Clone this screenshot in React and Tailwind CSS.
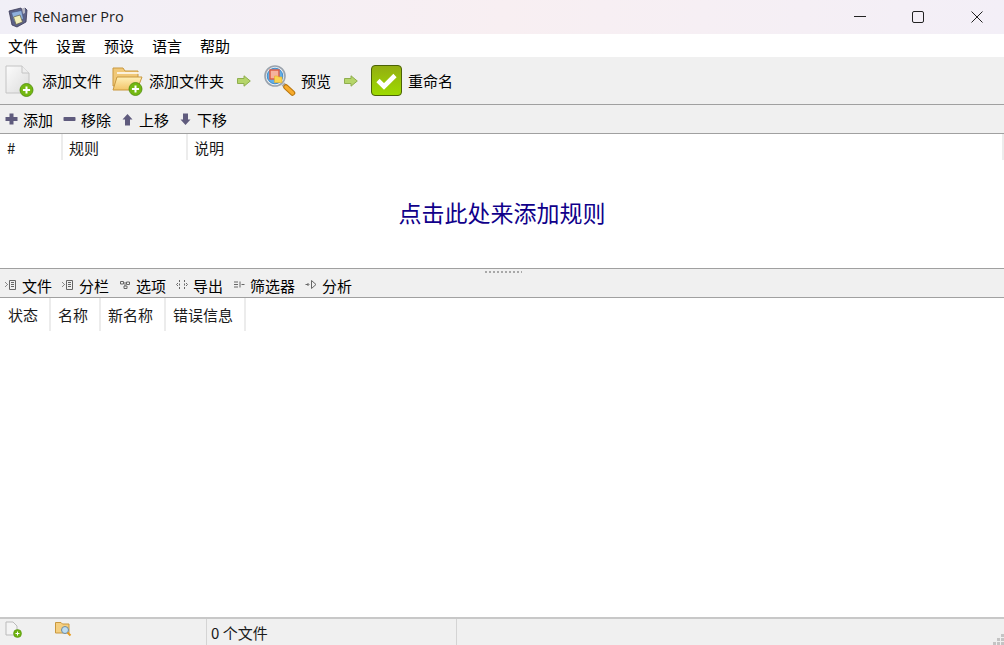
import React from 'react';

const CJK = 'font-["Noto_Sans_CJK_SC","Noto_Sans",sans-serif]';

const PlusBadge = ({ cx, cy, r }) => (
  <g>
    <circle cx={cx} cy={cy} r={r} fill="#74b811" stroke="#4c8a0a" strokeWidth="0.8" />
    <path d={`M${cx - r * 0.55} ${cy}H${cx + r * 0.55}M${cx} ${cy - r * 0.55}V${cy + r * 0.55}`} stroke="#fff" strokeWidth="2" />
  </g>
);

const FileAddIcon = () => (
  <svg width="30" height="32" viewBox="0 0 30 32">
    <defs>
      <linearGradient id="pg" x1="0" y1="0" x2="1" y2="1">
        <stop offset="0" stopColor="#fcfcfc" />
        <stop offset="1" stopColor="#dcdcdc" />
      </linearGradient>
    </defs>
    <path d="M2 1H18L25 8V28H2Z" fill="url(#pg)" stroke="#c4c4c4" />
    <path d="M18 1V8H25" fill="#eee" stroke="#c4c4c4" />
    <PlusBadge cx={22.5} cy={25} r={6.5} />
  </svg>
);

const FolderAddIcon = () => (
  <svg width="32" height="30" viewBox="0 0 32 30">
    <defs>
      <linearGradient id="fg" x1="0" y1="0" x2="0" y2="1">
        <stop offset="0" stopColor="#fff0b8" />
        <stop offset="1" stopColor="#f2c468" />
      </linearGradient>
    </defs>
    <path d="M1 2H11L13 5H26V20H1Z" fill="#f0c878" stroke="#c9983e" />
    <path d="M5 7H27" stroke="#fff" strokeWidth="1.5" />
    <path d="M1 24L5 11H30L25 24Z" fill="url(#fg)" stroke="#c9983e" />
    <PlusBadge cx={23.5} cy={23} r={6.5} />
  </svg>
);

const GreenArrow = () => (
  <svg width="14" height="12" viewBox="0 0 14 12">
    <path d="M0.5 3.5H7V0.8L13.3 6L7 11.2V8.5H0.5Z" fill="#b5d56a" stroke="#8fae4e" />
  </svg>
);

const MagnifierIcon = () => (
  <svg width="32" height="32" viewBox="0 0 32 32">
    <path d="M19 19L22 22" stroke="#a9a9a9" strokeWidth="4" />
    <path d="M22 22L28.5 28" stroke="#b9770f" strokeWidth="5.5" strokeLinecap="round" />
    <path d="M22 22L28.5 28" stroke="#f7ab2c" strokeWidth="3.4" strokeLinecap="round" />
    <circle cx="11" cy="11" r="10" fill="#e8eef4" stroke="#9aa3ad" strokeWidth="1.6" />
    <circle cx="11" cy="11" r="7.8" fill="#62aee6" stroke="#2b7fc4" strokeWidth="0.8" />
    <rect x="6" y="5" width="9" height="9" fill="#f5b29d" stroke="#dd5a40" strokeWidth="1.4" />
    <path d="M10.5 11H13.5L14.5 12H18V17.5H10.5Z" fill="#f9d44f" stroke="#e7ae27" strokeWidth="0.6" />
  </svg>
);

const CheckIcon = () => (
  <svg width="31" height="31" viewBox="0 0 31 31">
    <defs>
      <linearGradient id="cg" x1="0" y1="0" x2="0" y2="1">
        <stop offset="0" stopColor="#93ad12" />
        <stop offset="1" stopColor="#9edb00" />
      </linearGradient>
    </defs>
    <rect x="0.5" y="0.5" width="30" height="30" rx="3.5" fill="url(#cg)" stroke="#4b6207" />
    <path d="M7 15.5L13 21.5L24 10.5" fill="none" stroke="#fff" strokeWidth="4.6" />
  </svg>
);

const AppIcon = () => (
  <svg width="20" height="21" viewBox="0 0 20 21">
    <path d="M1 4L13 1L14 3L17 1L19 3L18 15L9 20L4 18Z" fill="#5d6288" stroke="#3a3855" strokeWidth="0.8" />
    <path d="M3.5 5.5L13.5 3.5L15.5 12L6 15Z" fill="#8fb0dc" stroke="#45527c" strokeWidth="0.6" />
    <path d="M5.5 10L12 8L14.5 15L8 17.5Z" fill="#f2efb8" stroke="#5d5a45" strokeWidth="0.7" />
    <path d="M14 1.5L17 1V6L15 7Z" fill="#b9b9c4" />
  </svg>
);

const SmallIcon = ({ kind }) => {
  const c = '#5f5b7d';
  if (kind === 'plus') return <svg width="13" height="12" viewBox="0 0 13 12"><path d="M4.5 0.5H8.5V4H12.5V8H8.5V11.5H4.5V8H0.5V4H4.5Z" fill={c} /></svg>;
  if (kind === 'minus') return <svg width="13" height="12" viewBox="0 0 13 12"><rect x="0.5" y="4" width="12" height="4" rx="0.8" fill={c} /></svg>;
  if (kind === 'up') return <svg width="13" height="13" viewBox="0 0 13 13"><path d="M6.5 1L11.5 6.5H9V12.5H4V6.5H1.5Z" fill={c} /></svg>;
  return <svg width="13" height="13" viewBox="0 0 13 13"><path d="M4 0.5H9V6.5H11.5L6.5 12L1.5 6.5H4Z" fill={c} /></svg>;
};

const TabIcon = ({ kind }) => {
  const props = { fill: 'none', stroke: '#666', strokeWidth: 1 };
  let inner;
  if (kind === 'files') inner = <><path d="M4.5 1.5H10.5V10.5H4.5ZM6 3.5H9M6 5.5H9M6 7.5H9" {...props} /><path d="M0 3h1v1H0ZM1 4h1v1H1ZM2 5h1v1H2ZM1 6h1v1H1ZM0 7h1v1H0Z" fill="#888" /></>;
  if (kind === 'options') inner = <path d="M1.5 2.5H4.5V5H1.5ZM7.5 3H10.5V5.5H7.5ZM5 7H8V9.5H5ZM4.5 4H7.5M6 5V7" {...props} />;
  if (kind === 'export') inner = <path d="M3.5 1V3M3.5 4.5V6.5M3.5 8V10M8.5 1V3M8.5 4.5V6.5M8.5 8V10M0.5 5.5L2 4M0.5 5.5L2 7M11.5 5.5L10 4M11.5 5.5L10 7" {...props} />;
  if (kind === 'filter') inner = <path d="M1 3H5M1 5.5H5M1 8H5M7 2.5V8.5M8.5 5.5H11.5" {...props} />;
  if (kind === 'analyze') inner = <><path d="M6.5 1.5L11 5.5L6.5 9.5Z" {...props} /><path d="M0.5 5.5H3.5M2.5 4L4 5.5L2.5 7" {...props} /></>;
  return <svg width="12" height="12" viewBox="0 0 12 12">{inner}</svg>;
};

const ToolButton = ({ icon, label, className = '' }) => (
  <div className={`flex items-center ${className}`}>
    {icon}
    <span className="text-[15px] leading-none text-black">{label}</span>
  </div>
);

const HeaderCell = ({ w, pl, label }) => (
  <div className={`${w} ${pl} flex h-full shrink-0 items-center border-r-2 border-[#ececec] text-[15px] text-[#1a1a1a]`}>
    {label}
  </div>
);

export default function App() {
  return (
    <div className={`flex h-[645px] w-[1004px] flex-col overflow-hidden bg-white ${CJK}`}>
      {/* title bar */}
      <div className="flex h-[34px] shrink-0 items-center bg-gradient-to-r from-[#f1eff7] via-[#f8eff2] to-[#f3eff7]">
        <div className="ml-[8px] flex w-[25px] shrink-0"><AppIcon /></div>
        <span className="font-['Open_Sans',sans-serif] text-[14.5px] text-[#1c1c1c]">ReNamer Pro</span>
        <div className="ml-auto flex items-center">
          <svg width="12" height="12" viewBox="0 0 12 12"><path d="M0 5.5H12" stroke="#222" /></svg>
          <svg className="ml-[46px]" width="12" height="12" viewBox="0 0 12 12"><rect x="0.5" y="0.5" width="11" height="11" rx="1.5" fill="none" stroke="#222" /></svg>
          <svg className="ml-[47px] mr-[21px]" width="12" height="12" viewBox="0 0 12 12"><path d="M0.5 0.5L11.5 11.5M11.5 0.5L0.5 11.5" stroke="#222" /></svg>
        </div>
      </div>

      {/* menu */}
      <div className="flex h-[23px] shrink-0 items-center gap-[18px] bg-white pl-[8px] text-[15px] leading-none text-black">
        <span>文件</span>
        <span>设置</span>
        <span>预设</span>
        <span>语言</span>
        <span>帮助</span>
      </div>

      {/* main toolbar */}
      <div className="flex h-[48px] shrink-0 items-center border-b border-[#a0a0a0] bg-[#f0f0f0] pl-[4px]">
        <ToolButton icon={<FileAddIcon />} label="添加文件" className="gap-[8px]" />
        <ToolButton icon={<FolderAddIcon />} label="添加文件夹" className="ml-[10px] gap-[5px]" />
        <div className="ml-[13px] flex"><GreenArrow /></div>
        <ToolButton icon={<MagnifierIcon />} label="预览" className="ml-[13px] gap-[5px]" />
        <div className="ml-[13px] flex"><GreenArrow /></div>
        <ToolButton icon={<CheckIcon />} label="重命名" className="ml-[13px] gap-[6px]" />
      </div>

      {/* rules toolbar */}
      <div className="flex h-[29px] shrink-0 items-center gap-[10px] border-b border-[#a0a0a0] bg-[#f0f0f0] pl-[5px] text-[15px] leading-none text-black">
        <div className="flex items-center gap-[5px]"><SmallIcon kind="plus" /><span>添加</span></div>
        <div className="flex items-center gap-[5px]"><SmallIcon kind="minus" /><span>移除</span></div>
        <div className="flex items-center gap-[5px]"><SmallIcon kind="up" /><span>上移</span></div>
        <div className="flex items-center gap-[5px]"><SmallIcon kind="down" /><span>下移</span></div>
      </div>

      {/* rules panel */}
      <div className="flex h-[134px] shrink-0 flex-col bg-white">
        <div className="flex h-[28px] shrink-0 pb-[2px] leading-none">
          <HeaderCell w="w-[63px]" pl="pl-[7px]" label="#" />
          <HeaderCell w="w-[125px]" pl="pl-[6px]" label="规则" />
          <HeaderCell w="flex-1" pl="pl-[6px]" label="说明" />
        </div>
        <div className="flex flex-1 justify-center pt-[33px] text-[23px] leading-[34px] text-[#10008a]">
          点击此处来添加规则
        </div>
      </div>

      {/* splitter + files toolbar */}
      <div className="relative flex h-[30px] shrink-0 items-center gap-[10px] border-y border-[#a0a0a0] bg-[#f0f0f0] pl-[5px] pt-[4px] text-[15px] leading-none text-black">
        <div className="absolute left-[485px] top-[2px] h-[2px] w-[37px] bg-[repeating-linear-gradient(90deg,#a8a8a8_0_2px,#f0f0f0_2px_4px)]" />
        <div className="flex items-center gap-[5px]"><TabIcon kind="files" /><span>文件</span></div>
        <div className="flex items-center gap-[5px]"><TabIcon kind="files" /><span>分栏</span></div>
        <div className="flex items-center gap-[5px]"><TabIcon kind="options" /><span>选项</span></div>
        <div className="flex items-center gap-[5px]"><TabIcon kind="export" /><span>导出</span></div>
        <div className="flex items-center gap-[5px]"><TabIcon kind="filter" /><span>筛选器</span></div>
        <div className="flex items-center gap-[5px]"><TabIcon kind="analyze" /><span>分析</span></div>
      </div>

      {/* files panel */}
      <div className="min-h-0 flex-1 bg-white">
        <div className="flex h-[33px] leading-none">
          <HeaderCell w="w-[51px]" pl="pl-[8px]" label="状态" />
          <HeaderCell w="w-[50px]" pl="pl-[7px]" label="名称" />
          <HeaderCell w="w-[65px]" pl="pl-[7px]" label="新名称" />
          <HeaderCell w="w-[80px]" pl="pl-[7px]" label="错误信息" />
        </div>
      </div>

      {/* status bar */}
      <div className="relative flex h-[28px] shrink-0 border-t-2 border-[#c8c8c8] bg-[#f0f0f0]">
        <div className="flex w-[207px] shrink-0 items-start border-r border-[#d4d4d4] pl-[5px] pt-[2px]">
          <svg width="17" height="17" viewBox="0 0 17 17">
            <path d="M1 1H8L12 5V14H1Z" fill="#f4f4f4" stroke="#bbb" />
            <circle cx="12.5" cy="12.5" r="4" fill="#6fb30f" stroke="#4c8a0a" strokeWidth="0.5" />
            <path d="M10.5 12.5H14.5M12.5 10.5V14.5" stroke="#fff" />
          </svg>
          <svg className="ml-[33px]" width="17" height="17" viewBox="0 0 17 17">
            <path d="M0.5 1.5H6L7.5 3H14V12H0.5Z" fill="#f5cf80" stroke="#c9983e" />
            <circle cx="10" cy="9" r="3.5" fill="#bcdcf2" stroke="#6d8aa0" />
            <path d="M12.5 11.5L15.5 14.5" stroke="#e59a1f" strokeWidth="2" />
          </svg>
        </div>
        <div className="flex w-[250px] shrink-0 items-center border-r border-[#d4d4d4] pl-[4px] text-[15px] leading-none text-[#1a1a1a]">
          0 个文件
        </div>
        <svg className="absolute bottom-0 right-0" width="11" height="11" viewBox="0 0 11 11">
          <path d="M8 0h3v3H8ZM4 4h3v3H4ZM8 4h3v3H8ZM0 8h3v3H0ZM4 8h3v3H4ZM8 8h3v3H8Z" fill="#c4c4c4" />
        </svg>
      </div>
    </div>
  );
}
